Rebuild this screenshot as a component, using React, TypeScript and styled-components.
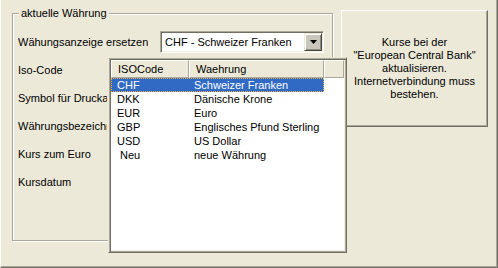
import React from 'react';
import styled, { createGlobalStyle } from 'styled-components';

const GlobalStyle = createGlobalStyle`
  html, body {
    margin: 0;
    padding: 0;
    background: #ece9d8;
  }
  * {
    box-sizing: border-box;
  }
`;

const currencies = [
  { code: 'CHF', name: 'Schweizer Franken' },
  { code: 'DKK', name: 'Dänische Krone' },
  { code: 'EUR', name: 'Euro' },
  { code: 'GBP', name: 'Englisches Pfund Sterling' },
  { code: 'USD', name: 'US Dollar' },
  { code: ' Neu', name: 'neue Währung' }
];

const labels = [
  'Wähungsanzeige ersetzen',
  'Iso-Code',
  'Symbol für Druckausgabe',
  'Währungsbezeichnung',
  'Kurs zum Euro',
  'Kursdatum'
];

const Window = styled.div`
  position: relative;
  width: 498px;
  height: 268px;
  display: flex;
  align-items: flex-start;
  padding: 0 0 0 11px;
  border-left: 1px solid #ffffff;
  border-right: 1px solid #716f64;
  border-bottom: 1px solid #716f64;
  box-shadow: inset -1px -1px 0 #aca899;
  font-family: 'Liberation Sans', Arial, sans-serif;
  font-size: 11px;
  color: #000;
  overflow: hidden;
`;

const GroupBox = styled.div`
  position: relative;
  margin-top: 13px;
  width: 321px;
  height: 228px;
  border: 1px solid #aca899;
  box-shadow: inset 1px 1px 0 #ffffff, 1px 1px 0 #ffffff;
  padding: 14px 0 0 5px;
`;

const Legend = styled.span`
  position: absolute;
  top: -7px;
  left: 6px;
  padding: 0 2px;
  background: #ece9d8;
  line-height: 13px;
`;

const FieldRow = styled.div`
  display: flex;
  align-items: center;
  height: 28px;
  white-space: nowrap;
`;

const Label = styled.span`
  width: 142px;
  line-height: 13px;
`;

/* the popup list covers the labels from here on, so they are cut at its edge */
const LabelText = styled.span<{ $clip?: boolean }>`
  display: inline-block;
  max-width: ${({ $clip }) => ($clip ? '89px' : 'none')};
  overflow: hidden;
  vertical-align: top;
`;

const Combo = styled.div`
  display: flex;
  align-items: stretch;
  width: 164px;
  height: 22px;
  background: #ffffff;
  border-top: 1px solid #aca899;
  border-left: 1px solid #aca899;
  border-right: 1px solid #ffffff;
  border-bottom: 1px solid #ffffff;
  box-shadow: inset 1px 1px 0 #716f64, inset -1px -1px 0 #f1efe2;
  padding: 1px;
`;

const ComboText = styled.span`
  flex: 1;
  padding-left: 3px;
  line-height: 18px;
`;

const ComboButton = styled.div`
  width: 18px;
  display: flex;
  align-items: center;
  justify-content: center;
  background: #c9c6bc;
  border-top: 1px solid #ece9d8;
  border-left: 1px solid #ece9d8;
  border-right: 1px solid #4a4940;
  border-bottom: 1px solid #4a4940;
  box-shadow: inset 1px 1px 0 #ffffff, inset -1px -1px 0 #8d8a7e;
`;

const InfoPanel = styled.div`
  margin: 10px 0 0 8px;
  width: 147px;
  height: 117px;
  display: flex;
  align-items: center;
  justify-content: center;
  text-align: center;
  line-height: 13px;
  border-top: 1px solid #ffffff;
  border-left: 1px solid #ffffff;
  border-right: 1px solid #716f64;
  border-bottom: 1px solid #716f64;
  box-shadow: inset -1px -1px 0 #aca899;
`;

const Popup = styled.div`
  position: absolute;
  left: 107px;
  top: 57px;
  width: 239px;
  height: 196px;
  background: #ffffff;
  border-top: 1px solid #ece9d8;
  border-left: 1px solid #ece9d8;
  border-right: 1px solid #716f64;
  border-bottom: 1px solid #716f64;
  box-shadow: inset 1px 1px 0 #aca899, inset 2px 2px 0 #716f64,
    inset -1px -1px 0 #aca899, inset -2px -2px 0 #f1efe2;
  padding: 2px;
`;

const HeaderRow = styled.div`
  display: flex;
  height: 18px;
`;

const HeaderCell = styled.div<{ $width: number }>`
  width: ${({ $width }) => $width}px;
  flex: ${({ $width }) => ($width ? '0 0 auto' : '1')};
  padding-left: 6px;
  line-height: 16px;
  background: #ece9d8;
  border-top: 1px solid #ffffff;
  border-left: 1px solid #ffffff;
  border-right: 1px solid #aca899;
  border-bottom: 1px solid #aca899;
`;

const ListRow = styled.div<{ $selected?: boolean }>`
  display: flex;
  width: 213px;
  height: 14px;
  line-height: 12px;
  white-space: nowrap;
  background: ${({ $selected }) => ($selected ? '#316ac5' : 'transparent')};
  color: ${({ $selected }) => ($selected ? '#ffffff' : '#000000')};
  border: 1px ${({ $selected }) => ($selected ? 'dotted #e8b048' : 'solid transparent')};
`;

const Cell = styled.span<{ $width: number }>`
  width: ${({ $width }) => $width}px;
  padding-left: 5px;
  white-space: pre;
  overflow: hidden;
`;

const Arrow = () => (
  <svg width="7" height="4" viewBox="0 0 7 4">
    <path d="M0 0H7L3.5 4Z" fill="#000" />
  </svg>
);

const App = () => (
  <>
    <GlobalStyle />
    <Window>
      <GroupBox>
        <Legend>aktuelle Währung</Legend>
        {labels.map((label, i) => (
          <FieldRow key={label}>
            <Label>
              <LabelText $clip={i > 0}>{label}</LabelText>
            </Label>
            {i === 0 && (
              <Combo>
                <ComboText>CHF - Schweizer Franken</ComboText>
                <ComboButton>
                  <Arrow />
                </ComboButton>
              </Combo>
            )}
          </FieldRow>
        ))}
      </GroupBox>
      <InfoPanel>
        Kurse bei der
        <br />
        "European Central Bank"
        <br />
        aktualisieren.
        <br />
        Internetverbindung muss
        <br />
        bestehen.
      </InfoPanel>
      <Popup>
        <HeaderRow>
          <HeaderCell $width={78}>ISOCode</HeaderCell>
          <HeaderCell $width={135}>Waehrung</HeaderCell>
          <HeaderCell $width={0} />
        </HeaderRow>
        {currencies.map((c, i) => (
          <ListRow key={c.code} $selected={i === 0}>
            <Cell $width={77}>{c.code}</Cell>
            <Cell $width={134}>{c.name}</Cell>
          </ListRow>
        ))}
      </Popup>
    </Window>
  </>
);

export default App;
